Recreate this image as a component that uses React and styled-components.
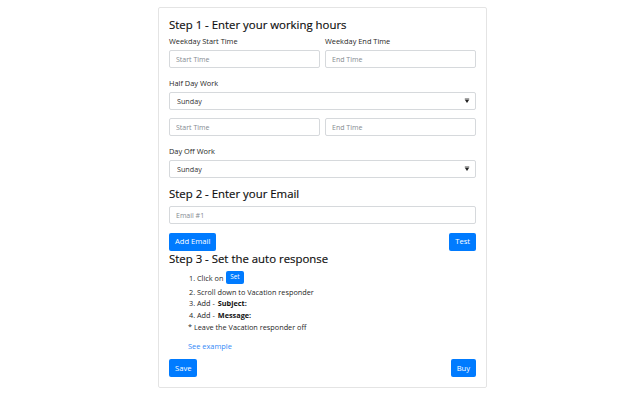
import React from "react";
import styled, { createGlobalStyle } from "styled-components";

const GlobalStyle = createGlobalStyle`
  body {
    margin: 0;
    background: #fff;
    font-family: "Open Sans", "Noto Sans", sans-serif;
    color: #212529;
  }
`;

const Page = styled.div`
  display: flex;
  justify-content: center;
  padding-top: 7px;
`;

const Panel = styled.div`
  box-sizing: border-box;
  width: 329px;
  margin-left: 5px;
  border: 1px solid #e4e4e4;
  border-radius: 2px;
  padding: 9px 10px 10px;
`;

const StepTitle = styled.h5`
  margin: 0 0 ${(p) => p.$gap || 0}px;
  font-size: 11.4px;
  font-weight: 500;
  line-height: 16px;
  color: #0d0d0d;
  -webkit-text-stroke: 0.15px #0d0d0d;
`;

const Group = styled.div`
  margin-bottom: ${(p) => (p.$gap === undefined ? 9 : p.$gap)}px;
`;

const Row = styled.div`
  display: grid;
  grid-template-columns: 1fr 1fr;
  column-gap: 5px;
  margin-bottom: ${(p) => (p.$gap === undefined ? 9 : p.$gap)}px;
`;

const Label = styled.label`
  display: block;
  font-size: 7.4px;
  line-height: 12px;
  margin-bottom: 3px;
  color: #1f1f1f;
`;

const Input = styled.input`
  box-sizing: border-box;
  display: block;
  width: 100%;
  height: 18px;
  padding: 0 6px;
  border: 1px solid #d6d9dc;
  border-radius: 2px;
  font-family: inherit;
  font-size: 7px;
  color: #495057;
  outline: none;

  &::placeholder {
    color: #858b91;
  }
`;

const SelectWrap = styled.div`
  position: relative;
`;

const Select = styled.select`
  box-sizing: border-box;
  display: block;
  width: 100%;
  height: 18px;
  padding: 0 7px;
  border: 1px solid #d6d9dc;
  border-radius: 2px;
  background: #fff;
  font-family: inherit;
  font-size: 7.2px;
  color: #333;
  appearance: none;
  outline: none;
`;

const Arrow = styled.svg`
  position: absolute;
  right: 6px;
  top: 6px;
  pointer-events: none;
`;

const ButtonRow = styled.div`
  display: flex;
  justify-content: space-between;
  align-items: center;
`;

const Button = styled.button`
  height: ${(p) => (p.$small ? 13 : 18)}px;
  padding: 0 ${(p) => (p.$small ? 4 : 6)}px;
  border: none;
  border-radius: 2px;
  background: #007bff;
  color: #fff;
  font-family: inherit;
  font-size: ${(p) => (p.$small ? 6.3 : 7.6)}px;
  line-height: 1;
  cursor: pointer;
`;

const Steps = styled.div`
  padding-left: 20px;
  margin-top: 2px;
  font-size: 7.3px;
  color: #1f1f1f;
`;

const StepLine = styled.div`
  display: flex;
  align-items: center;
  gap: 3px;
  height: ${(p) => (p.$tall ? 17 : 11.6)}px;
  margin-left: ${(p) => (p.$note ? -1 : 0)}px;
  white-space: nowrap;

  b {
    font-weight: 700;
    color: #111;
  }
`;

const ExampleLink = styled.a`
  display: block;
  margin: 8px 0 7px -1px;
  font-size: 7.4px;
  line-height: 12px;
  color: #3389f7;
  text-decoration: none;
`;

const DaySelect = () => (
  <SelectWrap>
    <Select defaultValue="Sunday">
      <option>Sunday</option>
      <option>Monday</option>
      <option>Tuesday</option>
      <option>Wednesday</option>
      <option>Thursday</option>
      <option>Friday</option>
      <option>Saturday</option>
    </Select>
    <Arrow width="6" height="6" viewBox="0 0 6 6">
      <rect x="0.8" y="0.6" width="4.4" height="0.9" fill="#222" />
      <path d="M1 2 H5 L3 5 Z" fill="#222" />
    </Arrow>
  </SelectWrap>
);

export default function App() {
  return (
    <>
      <GlobalStyle />
      <Page>
        <Panel>
          <StepTitle $gap={2}>Step 1 - Enter your working hours</StepTitle>
          <Row>
            <div>
              <Label>Weekday Start Time</Label>
              <Input placeholder="Start Time" />
            </div>
            <div>
              <Label>Weekday End Time</Label>
              <Input placeholder="End Time" />
            </div>
          </Row>
          <Group $gap={8}>
            <Label>Half Day Work</Label>
            <DaySelect />
          </Group>
          <Row>
            <Input placeholder="Start Time" />
            <Input placeholder="End Time" />
          </Row>
          <Group $gap={8}>
            <Label>Day Off Work</Label>
            <DaySelect />
          </Group>

          <StepTitle $gap={4}>Step 2 - Enter your Email</StepTitle>
          <Group $gap={9}>
            <Input placeholder="Email #1" />
          </Group>
          <ButtonRow>
            <Button>Add Email</Button>
            <Button>Test</Button>
          </ButtonRow>

          <StepTitle>Step 3 - Set the auto response</StepTitle>
          <Steps>
            <StepLine $tall>
              1. Click on <Button $small>Set</Button>
            </StepLine>
            <StepLine>2. Scroll down to Vacation responder</StepLine>
            <StepLine>
              3. Add - <b>Subject:</b>
            </StepLine>
            <StepLine>
              4. Add - <b>Message:</b>
            </StepLine>
            <StepLine $note>* Leave the Vacation responder off</StepLine>
            <ExampleLink href="#">See example</ExampleLink>
          </Steps>
          <ButtonRow>
            <Button>Save</Button>
            <Button>Buy</Button>
          </ButtonRow>
        </Panel>
      </Page>
    </>
  );
}
